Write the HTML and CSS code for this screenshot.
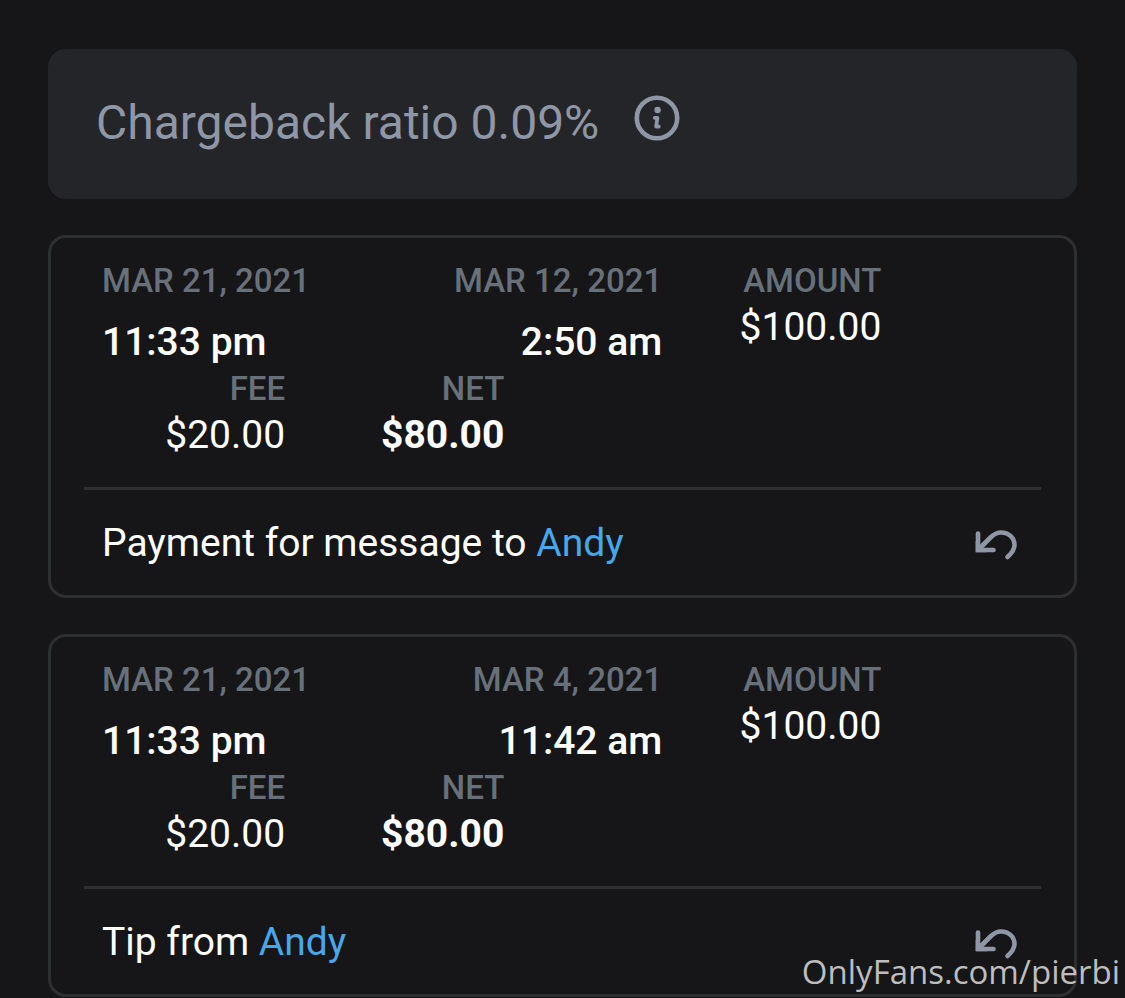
FILE: index.html
```html
<!DOCTYPE html>
<html lang="en">
<head>
    <meta charset="UTF-8">
    <meta name="viewport" content="width=device-width, initial-scale=1.0">
    <title>Chargebacks</title>
    <link rel="stylesheet" href="styles.css">
</head>
<body>
    <main class="container">
        <div class="ratio">
            <span>Chargeback ratio 0.09%</span>
            <button type="button" class="icon-button" aria-label="Info">
                <svg width="46" height="46" viewBox="0 0 46 46" fill="none" stroke="currentColor">
                    <circle cx="23" cy="23" r="20.2" stroke-width="4.6"/>
                    <circle cx="23.6" cy="15" r="3.2" fill="currentColor" stroke="none"/>
                    <path d="M20.8 22.8H23.4L22.2 31.6H24.8" stroke-width="3.8" stroke-linecap="round" stroke-linejoin="round"/>
                </svg>
            </button>
        </div>

        <section class="card">
            <div class="details">
                <div class="dates">
                    <div>
                        <div class="label">MAR 21, 2021</div>
                        <div class="time">11:33 pm</div>
                    </div>
                    <div class="right">
                        <div class="label">MAR 12, 2021</div>
                        <div class="time">2:50 am</div>
                    </div>
                </div>
                <div class="cell">
                    <div class="label">AMOUNT</div>
                    <div class="value">$100.00</div>
                </div>
                <div class="cell">
                    <div class="label">FEE</div>
                    <div class="value">$20.00</div>
                </div>
                <div class="cell">
                    <div class="label">NET</div>
                    <div class="value net">$80.00</div>
                </div>
            </div>
            <div class="description">
                <span>Payment for message to <a href="#">Andy</a></span>
                <button type="button" class="icon-button" aria-label="Undo">
                    <svg width="48" height="48" viewBox="0 0 48 48" fill="none" stroke="currentColor" stroke-width="4.6" stroke-linecap="round">
                        <path d="M6 14.5V31H21.500"/>
                        <path d="M7 30L18.500 18.500C22 15 25 13.500 29 13.500C37 13.500 42.500 19 42.500 26C42.500 31 40 34 35.500 38"/>
                        <path d="M3.700 22V33.300H15Z" fill="currentColor" stroke="none"/>
                    </svg>
                </button>
            </div>
        </section>

        <section class="card">
            <div class="details">
                <div class="dates">
                    <div>
                        <div class="label">MAR 21, 2021</div>
                        <div class="time">11:33 pm</div>
                    </div>
                    <div class="right">
                        <div class="label">MAR 4, 2021</div>
                        <div class="time">11:42 am</div>
                    </div>
                </div>
                <div class="cell">
                    <div class="label">AMOUNT</div>
                    <div class="value">$100.00</div>
                </div>
                <div class="cell">
                    <div class="label">FEE</div>
                    <div class="value">$20.00</div>
                </div>
                <div class="cell">
                    <div class="label">NET</div>
                    <div class="value net">$80.00</div>
                </div>
            </div>
            <div class="description">
                <span>Tip from <a href="#">Andy</a></span>
                <button type="button" class="icon-button" aria-label="Undo">
                    <svg width="48" height="48" viewBox="0 0 48 48" fill="none" stroke="currentColor" stroke-width="4.6" stroke-linecap="round">
                        <path d="M6 14.5V31H21.500"/>
                        <path d="M7 30L18.500 18.500C22 15 25 13.500 29 13.500C37 13.500 42.500 19 42.500 26C42.500 31 40 34 35.500 38"/>
                        <path d="M3.700 22V33.300H15Z" fill="currentColor" stroke="none"/>
                    </svg>
                </button>
            </div>
        </section>
    </main>
    <div class="watermark">OnlyFans.com/pierbi</div>
</body>
</html>
```
FILE: styles.css
```css
* {
    box-sizing: border-box;
}
body {
    margin: 0;
    background-color: #161618;
    color: #fefefe;
    font-family: Roboto, Arial, sans-serif;
    font-size: 39px;
    line-height: 48px;
}
.container {
    display: flex;
    flex-direction: column;
    gap: 36px;
    padding: 49px 48px 0;
}
.ratio {
    display: flex;
    align-items: flex-start;
    gap: 35px;
    min-height: 150px;
    padding: 46px 48px;
    background-color: #242529;
    border-radius: 18px;
    color: #8f96a5;
    font-size: 48px;
    line-height: 56px;
}
.icon-button {
    display: block;
    padding: 0;
    border: none;
    background: none;
    color: #8f96a5;
    cursor: pointer;
}
.icon-button svg {
    display: block;
}
.card {
    padding: 21px 33px 0;
    border: 3px solid #2e2f31;
    border-radius: 18px;
}
.details {
    display: flex;
    flex-wrap: wrap;
    padding-bottom: 28px;
    border-bottom: 3px solid #2e2f31;
}
.dates {
    display: flex;
    justify-content: space-between;
    width: 62.3%;
    padding: 0 18px;
}
.right {
    text-align: right;
}
.cell {
    width: 22.9%;
    padding: 0 18px;
    text-align: right;
}
.label {
    color: #68707a;
    font-size: 33px;
    font-weight: 500;
    line-height: 44px;
}
.time {
    margin-top: 15px;
    padding-bottom: 1px;
    font-weight: 500;
}
.net {
    font-weight: 700;
}
.description {
    display: flex;
    align-items: center;
    justify-content: space-between;
    min-height: 105px;
    padding: 0 21px 0 18px;
}
a {
    color: #46a8ea;
    text-decoration: none;
}
.watermark {
    position: absolute;
    right: 5px;
    bottom: 2px;
    color: #bdbdbe;
    font-family: "Open Sans", sans-serif;
    font-size: 33px;
}
```
